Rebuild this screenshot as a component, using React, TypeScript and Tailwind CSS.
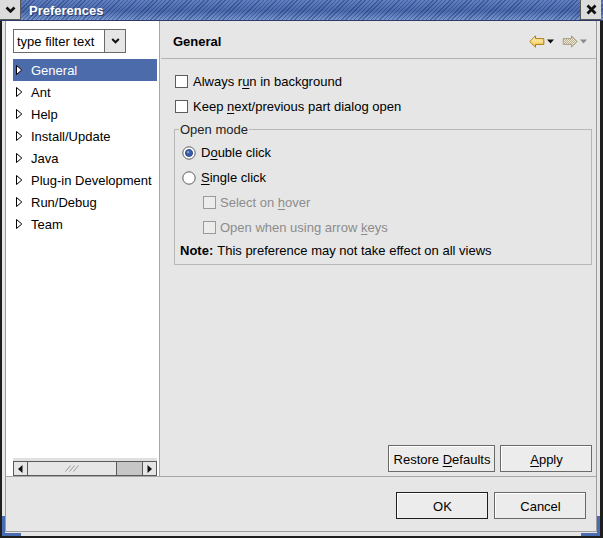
import React from "react";

const U = ({ children }: { children: React.ReactNode }) => (
  <span className="underline underline-offset-[2px] decoration-1">{children}</span>
);

const Check = ({ disabled }: { disabled?: boolean }) => (
  <span
    className={
      "inline-block w-[13px] h-[13px] shrink-0 border " +
      (disabled ? "border-[#9a9a9a] bg-[#ececec]" : "border-[#5c5c5c] bg-white")
    }
  />
);

const Radio = ({ checked }: { checked?: boolean }) => (
  <svg width="14" height="14" viewBox="0 0 14 14" className="shrink-0">
    <circle cx="7" cy="7" r="6.2" fill="#ffffff" stroke="#5c5c5c" strokeWidth="1" />
    {checked && (
      <>
        <circle cx="7" cy="7" r="3.6" fill="#3b5ea6" stroke="#23407d" strokeWidth="0.8" />
        <circle cx="6.2" cy="6.2" r="1.1" fill="#8aa6dc" />
      </>
    )}
  </svg>
);

const TreeArrow = () => (
  <svg width="7" height="10" viewBox="0 0 7 10" className="shrink-0">
    <polygon points="0.5,0.5 5.8,5 0.5,9.5" fill="#ffffff" stroke="#000000" strokeWidth="1" />
  </svg>
);

const Btn = ({
  children,
  w,
  strong,
}: {
  children: React.ReactNode;
  w: string;
  strong?: boolean;
}) => (
  <div
    className={
      "h-[27px] flex items-center justify-center bg-[#ececec] border " +
      (strong ? "border-[#1e1e1e] " : "border-[#6a6a6a] ") +
      w
    }
  >
    <div className="w-full h-full flex items-center justify-center border-t border-l border-white">
      {children}
    </div>
  </div>
);

const treeItems = ["Ant", "Help", "Install/Update", "Java", "Plug-in Development", "Run/Debug", "Team"];

export default function App() {
  return (
    <div className="relative w-[603px] h-[538px] bg-[#e6e6e6] overflow-hidden flex flex-col font-['Liberation_Sans',Arial,sans-serif] text-[13px] text-black leading-none">
      {/* Title bar */}
      <div className="h-[21px] shrink-0 flex items-stretch border-b border-[#2a3c66] [background-image:repeating-linear-gradient(135deg,rgba(20,40,90,0.4)_0px,rgba(20,40,90,0.4)_1px,transparent_1px,transparent_3px),linear-gradient(to_bottom,#6080c2,#4a6aae_55%,#7896d2)]">
        <div className="w-[21px] bg-[#dcdcdc] border-r border-b border-[#5a5a5a] flex items-center justify-center">
          <svg width="11" height="8" viewBox="0 0 11 8">
            <polyline points="1.5,1.5 5.5,5.5 9.5,1.5" fill="none" stroke="#111" strokeWidth="2.6" />
          </svg>
        </div>
        <div className="flex-1 flex items-center pl-[8px] text-white font-bold text-[13px] [text-shadow:1px_1px_0_#2a3f70]">
          Preferences
        </div>
        <div className="w-[21px] mr-[2px] bg-[#dcdcdc] border-l border-b border-[#5a5a5a] flex items-center justify-center">
          <svg width="11" height="11" viewBox="0 0 11 11">
            <path d="M1.5 1.5 L9.5 9.5 M9.5 1.5 L1.5 9.5" stroke="#111" strokeWidth="2.8" />
          </svg>
        </div>
      </div>

      {/* Frame */}
      <div className="flex-1 flex border-l-2 border-r-[3px] border-b-2 border-[#1e1e1e] px-[3px] pb-[4px]">
        <div className="flex-1 flex flex-col border-l border-r border-b border-[#9c9c9c]">
          {/* Body */}
          <div className="h-[455px] shrink-0 flex">
            {/* Left panel */}
            <div className="w-[153px] shrink-0 bg-white flex flex-col">
              <div className="pt-[8px] pl-[7px] flex">
                <div className="w-[92px] h-[24px] bg-white border border-[#6a6a6a] flex items-center pl-[3px] whitespace-nowrap overflow-hidden">
                  type filter text
                </div>
                <div className="w-[21px] h-[24px] bg-[#e6e6e6] border border-l-0 border-[#6a6a6a] flex items-center justify-center">
                  <svg width="9" height="6" viewBox="0 0 9 6">
                    <polyline points="1.2,1 4.5,4.3 7.8,1" fill="none" stroke="#111" strokeWidth="2" />
                  </svg>
                </div>
              </div>
              <div className="mt-[6px] pl-[7px] pr-[2px] flex flex-col">
                <div className="h-[22px] bg-[#4b6baa] text-white flex items-center pl-[3px] gap-[8px]">
                  <TreeArrow />
                  <span>General</span>
                </div>
                {treeItems.map((t) => (
                  <div key={t} className="h-[22px] flex items-center pl-[3px] gap-[8px] whitespace-nowrap">
                    <TreeArrow />
                    <span>{t}</span>
                  </div>
                ))}
              </div>
              <div className="mt-auto pl-[7px] pr-[2px]">
                <div className="h-[3px] bg-[#e0e0e0]" />
                <div className="h-[15px] flex bg-[#c6c6c6] border border-[#5a5a5a]">
                  <div className="w-[14px] bg-[#e6e6e6] border-r border-[#5a5a5a] flex items-center justify-center">
                    <svg width="5" height="8" viewBox="0 0 5 8">
                      <polygon points="4.5,0 0,4 4.5,8" fill="#111" />
                    </svg>
                  </div>
                  <div className="w-[89px] bg-[#e6e6e6] border-r border-[#5a5a5a] flex items-center justify-center">
                    <svg width="14" height="7" viewBox="0 0 14 7">
                      <path d="M0.5 6.5 L5.5 0.5 M4.5 6.5 L9.5 0.5 M8.5 6.5 L13.5 0.5" stroke="#9a9a9a" strokeWidth="1" />
                    </svg>
                  </div>
                  <div className="flex-1" />
                  <div className="w-[14px] bg-[#e6e6e6] border-l border-[#5a5a5a] flex items-center justify-center">
                    <svg width="5" height="8" viewBox="0 0 5 8">
                      <polygon points="0.5,0 5,4 0.5,8" fill="#111" />
                    </svg>
                  </div>
                </div>
              </div>
            </div>

            {/* Sash */}
            <div className="w-[2px] shrink-0 border-l border-[#a8a8a8] bg-[#e6e6e6]" />

            {/* Right panel */}
            <div className="flex-1 flex flex-col">
              <div className="h-[38px] shrink-0 flex items-center pl-[12px] pr-[9px] pt-[3px] border-b border-[#b4b4b4]">
                <span className="font-bold">General</span>
                <div className="ml-auto flex items-center">
                  <svg width="16" height="13" viewBox="0 0 16 13">
                    <defs>
                      <linearGradient id="yb" x1="0" y1="0" x2="0" y2="1">
                        <stop offset="0" stopColor="#fff6c8" />
                        <stop offset="1" stopColor="#f4c84a" />
                      </linearGradient>
                    </defs>
                    <polygon points="0.8,6.5 6.5,0.8 6.5,3.6 14.8,3.6 14.8,9.4 6.5,9.4 6.5,12.2" fill="url(#yb)" stroke="#b27a10" strokeWidth="1" />
                  </svg>
                  <svg width="7" height="5" viewBox="0 0 7 5" className="ml-[2px]">
                    <polygon points="0,0.5 7,0.5 3.5,4.5" fill="#111" />
                  </svg>
                  <svg width="16" height="13" viewBox="0 0 16 13" className="ml-[8px]">
                    <defs>
                      <pattern id="chk" width="2" height="2" patternUnits="userSpaceOnUse">
                        <rect width="2" height="2" fill="#efe9d6" />
                        <rect width="1" height="1" fill="#b8ad90" />
                        <rect x="1" y="1" width="1" height="1" fill="#b8ad90" />
                      </pattern>
                    </defs>
                    <polygon points="15.2,6.5 9.5,0.8 9.5,3.6 1.2,3.6 1.2,9.4 9.5,9.4 9.5,12.2" fill="url(#chk)" stroke="#a8a088" strokeWidth="1" />
                  </svg>
                  <svg width="7" height="5" viewBox="0 0 7 5" className="ml-[2px]">
                    <polygon points="0,0.5 7,0.5 3.5,4.5" fill="#8a8a8a" />
                  </svg>
                </div>
              </div>

              <div className="flex-1 flex flex-col pt-[10px] pl-[13px] pr-[4px]">
                <div className="h-[25px] flex items-center gap-[5px] pl-[1px]">
                  <Check />
                  <span>
                    Always r<U>u</U>n in background
                  </span>
                </div>
                <div className="h-[25px] flex items-center gap-[5px] pl-[1px]">
                  <Check />
                  <span>
                    Keep <U>n</U>ext/previous part dialog open
                  </span>
                </div>

                <div className="relative mt-[10px] border border-[#b8b8b8] pt-[10px] pb-[3px]">
                  <div className="absolute -top-[7px] left-[4px] bg-[#e6e6e6] px-[1px] text-[#222] leading-[13px]">
                    Open mode
                  </div>
                  <div className="h-[25px] flex items-center gap-[5px] pl-[7px]">
                    <Radio checked />
                    <span>
                      D<U>o</U>uble click
                    </span>
                  </div>
                  <div className="h-[25px] flex items-center gap-[5px] pl-[7px]">
                    <Radio />
                    <span>
                      <U>S</U>ingle click
                    </span>
                  </div>
                  <div className="h-[25px] flex items-center gap-[4px] pl-[28px] text-[#8c8c8c]">
                    <Check disabled />
                    <span>
                      Select on <U>h</U>over
                    </span>
                  </div>
                  <div className="h-[25px] flex items-center gap-[4px] pl-[28px] text-[#8c8c8c]">
                    <Check disabled />
                    <span>
                      Open when using arrow <U>k</U>eys
                    </span>
                  </div>
                  <div className="h-[21px] flex items-center pl-[5px]">
                    <span className="font-bold">Note:</span>
                    <span className="ml-[4px]">This preference may not take effect on all views</span>
                  </div>
                </div>

                <div className="mt-auto mb-[4px] flex justify-end gap-[5px]">
                  <Btn w="w-[107px]">
                    Restore&nbsp;<U>D</U>efaults
                  </Btn>
                  <Btn w="w-[92px]">
                    <span>
                      <U>A</U>pply
                    </span>
                  </Btn>
                </div>
              </div>
            </div>
          </div>

          {/* Separator */}
          <div className="h-[1px] shrink-0 bg-[#a8a8a8]" />

          {/* Bottom bar */}
          <div className="flex-1 flex justify-end items-start pt-[15px] pr-[10px] gap-[6px]">
            <Btn w="w-[92px]" strong>
              OK
            </Btn>
            <Btn w="w-[92px]">Cancel</Btn>
          </div>
        </div>
      </div>

      {/* Corner highlights */}
      <div className="absolute left-[2px] bottom-[2px] w-[3px] h-[20px] bg-[#4a6cb0]" />
      <div className="absolute left-[2px] bottom-[2px] w-[19px] h-[3px] bg-[#4a6cb0]" />
      <div className="absolute right-[3px] bottom-[2px] w-[3px] h-[20px] bg-[#4a6cb0]" />
      <div className="absolute right-[3px] bottom-[2px] w-[19px] h-[3px] bg-[#4a6cb0]" />
    </div>
  );
}
